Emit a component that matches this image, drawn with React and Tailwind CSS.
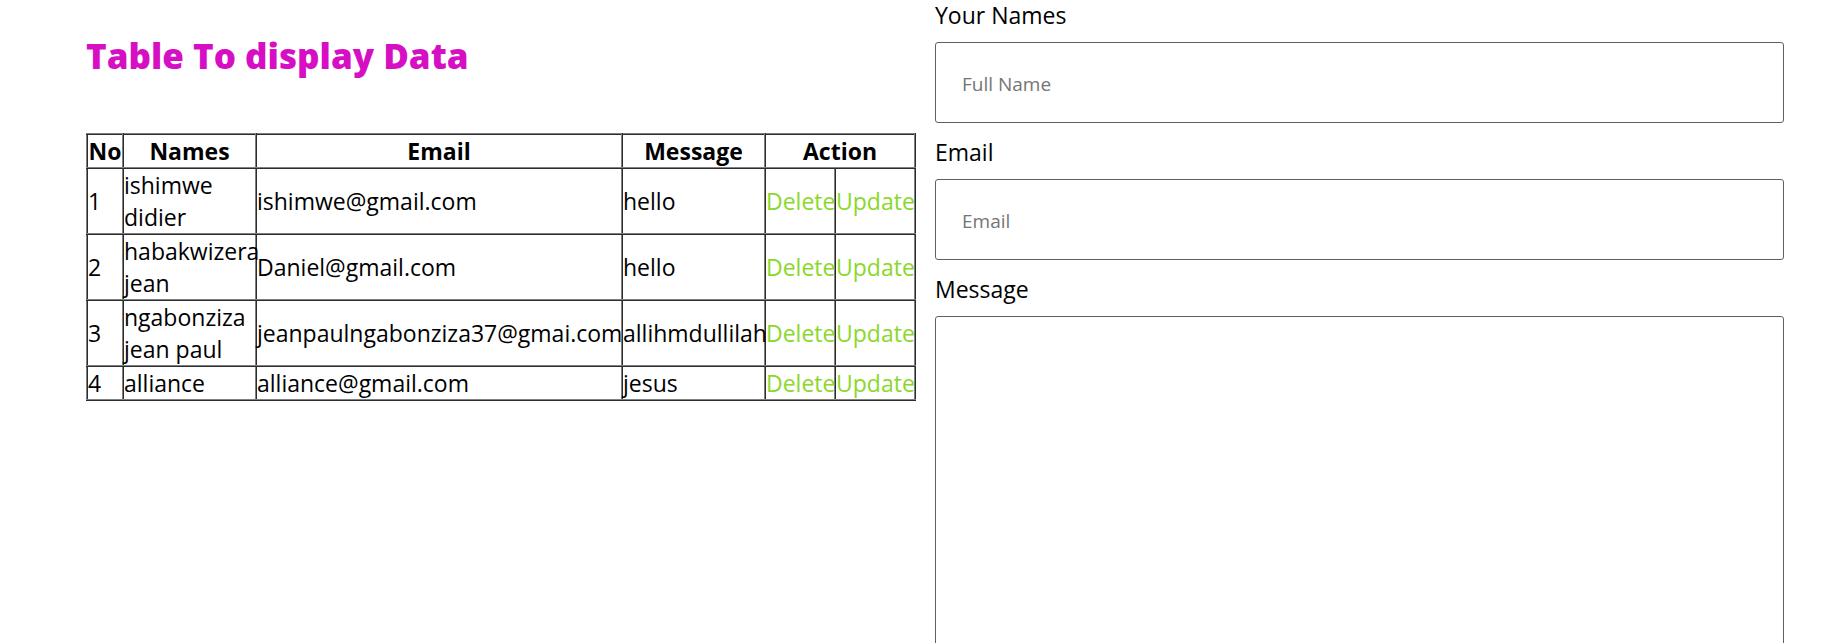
const rows = [
  { no: 1, name: "ishimwe didier", email: "ishimwe@gmail.com", message: "hello" },
  { no: 2, name: "habakwizera jean", email: "Daniel@gmail.com", message: "hello" },
  { no: 3, name: "ngabonziza jean paul", email: "jeanpaulngabonziza37@gmai.com", message: "allihmdullilah" },
  { no: 4, name: "alliance", email: "alliance@gmail.com", message: "jesus" },
];

const cell = "border-2 border-[#808080] [border-style:inset] p-0";
const field =
  "mt-3 block w-full rounded-[3px] border border-[#606060] bg-white px-[26px] text-[19px] text-black placeholder:text-[#757575]";
const label = "block text-[23px] leading-[30px]";

function DataTable() {
  return (
    <table className="w-[830px] table-fixed border-collapse border-2 border-[#808080] text-[23px] leading-8 [border-style:outset]">
      <colgroup>
        <col className="w-[36px]" />
        <col className="w-[133px]" />
        <col className="w-[366px]" />
        <col className="w-[143px]" />
        <col className="w-[70px]" />
        <col className="w-[80px]" />
      </colgroup>
      <thead>
        <tr className="font-bold">
          <th className={cell}>No</th>
          <th className={cell}>Names</th>
          <th className={cell}>Email</th>
          <th className={cell}>Message</th>
          <th className={cell} colSpan={2}>Action</th>
        </tr>
      </thead>
      <tbody>
        {rows.map((row) => (
          <tr key={row.no}>
            <td className={cell}>{row.no}</td>
            <td className={cell}>{row.name}</td>
            <td className={cell}>{row.email}</td>
            <td className={cell}>{row.message}</td>
            <td className={cell}>
              <a href="#delete" className="text-[#8ad82b]">Delete</a>
            </td>
            <td className={cell}>
              <a href="#update" className="text-[#8ad82b]">Update</a>
            </td>
          </tr>
        ))}
      </tbody>
    </table>
  );
}

export default function App() {
  return (
    <main className="flex h-screen items-start gap-[19px] overflow-hidden bg-white pr-[46px] pl-[86px] font-['Open_Sans','Noto_Sans',sans-serif] text-black">
      <section className="shrink-0 pt-8">
        <h1 className="mb-[53px] text-[35px] leading-[48px] font-extrabold text-[#d70fc4]">
          Table To display Data
        </h1>
        <DataTable />
      </section>
      <form className="flex min-w-0 flex-1 flex-col gap-[14px]">
        <div>
          <label htmlFor="names" className={label}>Your Names</label>
          <input id="names" type="text" placeholder="Full Name" className={`${field} h-[81px] pt-[2px]`} />
        </div>
        <div>
          <label htmlFor="email" className={label}>Email</label>
          <input id="email" type="email" placeholder="Email" className={`${field} h-[81px] pt-[2px]`} />
        </div>
        <div>
          <label htmlFor="message" className={label}>Message</label>
          <textarea id="message" className={`${field} h-[400px] resize-none py-[26px]`} />
        </div>
      </form>
    </main>
  );
}
